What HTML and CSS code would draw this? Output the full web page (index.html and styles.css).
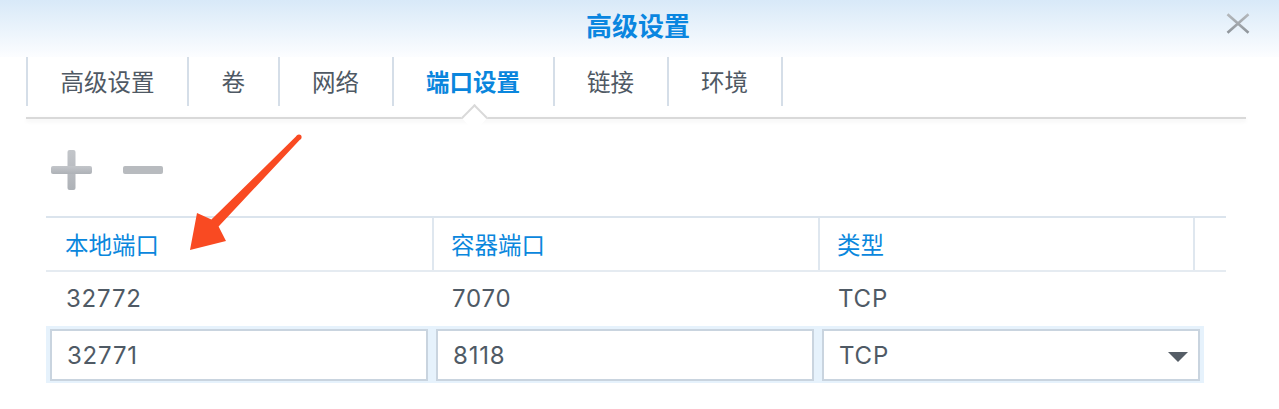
FILE: index.html
```html
<!DOCTYPE html>
<html lang="zh-CN">
<head>
<meta charset="utf-8">
<title>高级设置</title>
<link rel="stylesheet" href="styles.css">
</head>
<body>
<div class="dialog">
  <header class="titlebar">
    <h1 class="title">高级设置</h1>
    <button class="close" aria-label="关闭">
      <svg width="24" height="21" viewBox="0 0 24 21">
        <defs>
          <linearGradient id="xg" x1="0" y1="0" x2="0" y2="1">
            <stop offset="0" stop-color="#b4b8bc"/>
            <stop offset="1" stop-color="#8f959b"/>
          </linearGradient>
        </defs>
        <path d="M1.5 1.2 L22.5 19.8 M22.5 1.2 L1.5 19.8" stroke="url(#xg)" stroke-width="2.6" fill="none"/>
      </svg>
    </button>
  </header>

  <nav class="tabs">
    <div class="tab">高级设置</div>
    <div class="tab">卷</div>
    <div class="tab">网络</div>
    <div class="tab active">端口设置</div>
    <div class="tab">链接</div>
    <div class="tab">环境</div>
  </nav>
  <div class="tab-rule"></div>

  <div class="toolbar">
    <button class="tool" aria-label="新增">
      <svg width="41" height="40" viewBox="0 0 41 40">
        <defs>
          <linearGradient id="pg" x1="0" y1="0" x2="0" y2="1">
            <stop offset="0" stop-color="#c3c6ca"/>
            <stop offset="1" stop-color="#aeb2b7"/>
          </linearGradient>
        </defs>
        <rect x="16.5" y="0" width="8" height="40" rx="2" fill="url(#pg)"/>
        <rect x="0" y="16" width="41" height="8" rx="2" fill="url(#pg)"/>
      </svg>
    </button>
    <button class="tool" aria-label="删除">
      <svg width="40" height="8" viewBox="0 0 40 8">
        <rect x="0" y="0" width="40" height="8" rx="2" fill="#b8bbbf"/>
      </svg>
    </button>
  </div>

  <div class="grid">
    <div class="thead">
      <div class="th">本地端口</div>
      <div class="th">容器端口</div>
      <div class="th">类型</div>
      <div class="th"></div>
    </div>
    <div class="row">
      <div class="td">32772</div>
      <div class="td">7070</div>
      <div class="td">TCP</div>
      <div class="td"></div>
    </div>
    <div class="edit-row">
      <input class="field" type="text" value="32771" readonly>
      <input class="field" type="text" value="8118" readonly>
      <div class="field select">
        <span>TCP</span>
        <svg width="20" height="10" viewBox="0 0 20 10"><path d="M0 0 H20 L10 10 Z" fill="#555d66"/></svg>
      </div>
    </div>
  </div>

  <svg class="annotation" width="320" height="260" viewBox="0 0 320 260" aria-hidden="true">
    <polygon fill="#f94a22" points="297.2,135.3 211.4,219.5 197,213 190,250 226,241 218.6,226.5 300.8,138.7"/>
    <circle cx="299" cy="137" r="2.6" fill="#f94a22"/>
  </svg>
</div>
</body>
</html>
```

FILE: styles.css
```css
* {
  box-sizing: border-box;
}

html,
body {
  margin: 0;
  padding: 0;
}

body {
  width: 1279px;
  height: 409px;
  overflow: hidden;
  background: #ffffff;
  font-family: "Inter", "Noto Sans CJK SC", sans-serif;
  color: #4f5a65;
}

.dialog {
  position: relative;
  height: 409px;
}

/* title bar */
.titlebar {
  display: grid;
  grid-template-columns: 1fr auto 1fr;
  align-items: start;
  height: 57px;
  background: linear-gradient(to bottom, #d8e9f8 0%, #e8f2fb 45%, #fcfdff 100%);
}

.title {
  grid-column: 2;
  margin: 0 3px 0 0;
  font-family: "Noto Sans CJK SC", sans-serif;
  font-size: 26px;
  font-weight: 700;
  line-height: 50px;
  color: #0a86e0;
}

.close {
  grid-column: 3;
  justify-self: end;
  margin: 13px 29px 0 0;
  width: 24px;
  height: 21px;
  padding: 0;
  border: 0;
  background: none;
  display: block;
}

.close svg {
  display: block;
}

/* tabs */
.tabs {
  display: flex;
  margin-left: 26px;
  height: 49px;
}

.tab {
  position: relative;
  border-left: 2px solid #d5dee8;
  padding: 0 32.5px;
  line-height: 49px;
  font-size: 23.5px;
  color: #4f5964;
  font-family: "Noto Sans CJK SC", sans-serif;
}

.tab:last-child {
  border-right: 2px solid #d5dee8;
}

.tab.active {
  color: #0a86dd;
  font-weight: 700;
}

.tab.active::after {
  content: "";
  position: absolute;
  left: 50%;
  top: 51px;
  width: 17px;
  height: 17px;
  margin-left: -8.5px;
  background: #ffffff;
  border-top: 2px solid #d9d9d9;
  border-left: 2px solid #d9d9d9;
  transform: rotate(45deg);
  z-index: 2;
}

.tab-rule {
  position: relative;
  z-index: 1;
  margin: 11px 0 0 26px;
  width: 1220px;
  height: 2px;
  background: #d9d9d9;
  box-shadow: 0 2px 4px rgba(0, 0, 0, 0.08);
}

/* toolbar */
.toolbar {
  display: flex;
  align-items: center;
  gap: 31px;
  margin-top: 31px;
  padding-left: 51px;
  height: 40px;
}

.tool {
  padding: 0;
  border: 0;
  background: none;
  display: block;
}

.tool svg {
  display: block;
}

/* grid */
.grid {
  margin: 26px 0 0 46px;
  width: 1180px;
}

.thead,
.row {
  display: grid;
  grid-template-columns: 386px 386px 375px 33px;
}

.thead {
  height: 56px;
  border-top: 2px solid #dbe4ed;
  border-bottom: 2px solid #e5ebf1;
}

.th {
  border-left: 2px solid #dfe7ef;
  padding-left: 17px;
  line-height: 52px;
  font-size: 23.5px;
  color: #0a87dd;
  font-family: "Noto Sans CJK SC", sans-serif;
}

.th:first-child {
  border-left-color: transparent;
}

.row {
  height: 54px;
}

.td {
  border-left: 2px solid transparent;
  padding-left: 18px;
  line-height: 54px;
  font-size: 24px;
  letter-spacing: 0.8px;
}

.edit-row {
  display: flex;
  gap: 8px;
  width: 1158px;
  height: 57px;
  padding: 3px 4px 2px;
  background: #e6f2fc;
}

.field {
  width: 378px;
  height: 52px;
  margin: 0;
  border: 2px solid #c9d4df;
  border-radius: 0;
  background: #ffffff;
  font-family: "Inter", "Noto Sans CJK SC", sans-serif;
  font-size: 24px;
  letter-spacing: 0.8px;
  color: #4f5a65;
  padding: 0 0 0 15px;
  outline: none;
}

.select {
  display: flex;
  align-items: center;
  justify-content: space-between;
  padding-right: 10px;
}

.select svg {
  display: block;
  margin-top: 4px;
}

/* annotation arrow */
.annotation {
  position: absolute;
  left: 0;
  top: 0;
  pointer-events: none;
}
```
